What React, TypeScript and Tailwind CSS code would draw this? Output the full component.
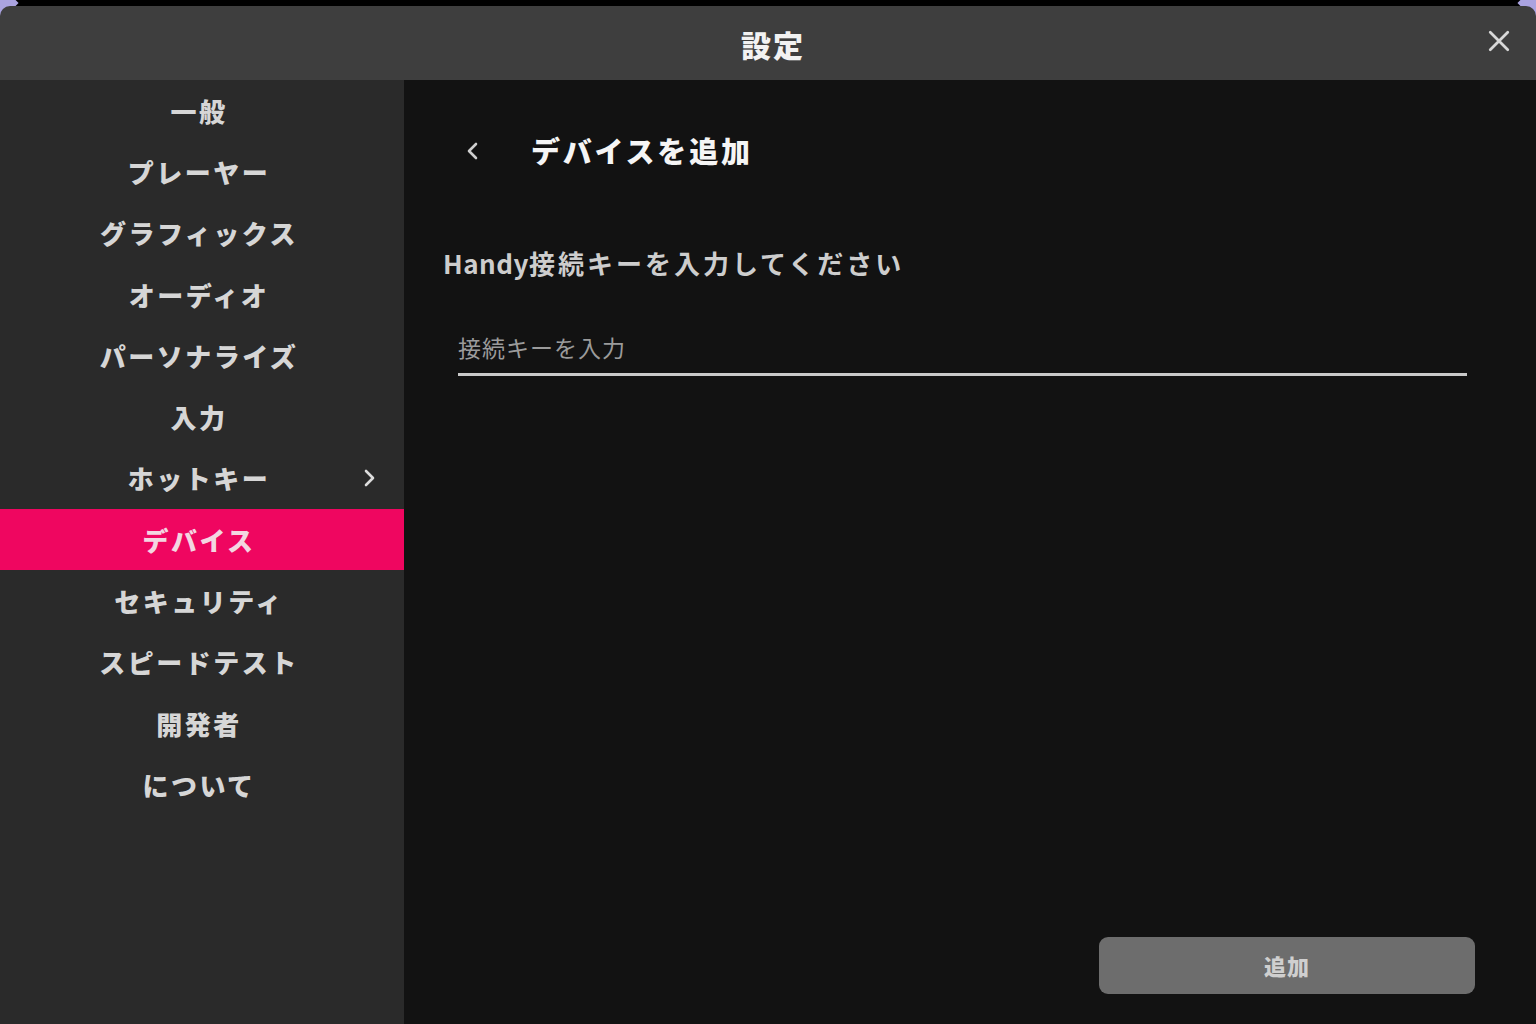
import React from "react";

const items = [
  "一般",
  "プレーヤー",
  "グラフィックス",
  "オーディオ",
  "パーソナライズ",
  "入力",
  "ホットキー",
  "デバイス",
  "セキュリティ",
  "スピードテスト",
  "開発者",
  "について",
];

const font = { fontFamily: '"Noto Sans CJK JP", "Noto Sans", sans-serif' };

function Chevron({ dir, className }: { dir: "left" | "right"; className?: string }) {
  return (
    <svg viewBox="0 0 24 24" className={className} fill="none" stroke="currentColor" strokeWidth={2.6} strokeLinecap="round" strokeLinejoin="round">
      {dir === "left" ? <path d="M15 5l-7 7 7 7" /> : <path d="M9 5l7 7-7 7" />}
    </svg>
  );
}

export default function App() {
  return (
    <div className="relative w-[1536px] h-[1024px] overflow-hidden bg-black flex flex-col pt-[6px]" style={font}>
      <div className="absolute -top-[8px] -left-[8px] w-[22px] h-[22px] rotate-45 bg-[#aaa3e0]" />
      <div className="absolute -top-[8px] -right-[8px] w-[22px] h-[22px] rotate-45 bg-[#aaa3e0]" />

      {/* header */}
      <div className="relative h-[74px] shrink-0 bg-[#3e3e3e] flex items-center justify-center rounded-t-[10px]">
        <span className="text-[30px] font-black text-[#f2f2f2] tracking-[2px] leading-none mt-[2px] ml-[10px]">設定</span>
        <button className="absolute right-[22px] top-[20px] text-[#d8d8d8]">
          <svg viewBox="0 0 24 24" className="w-[30px] h-[30px]" fill="none" stroke="currentColor" strokeWidth={2.2} strokeLinecap="round">
            <path d="M5 5l14 14M19 5L5 19" />
          </svg>
        </button>
      </div>

      <div className="flex flex-1 min-h-0">
        {/* sidebar */}
        <div className="w-[404px] shrink-0 bg-[#2a2a2a] flex flex-col">
          {items.map((label) => {
            const active = label === "デバイス";
            return (
              <div
                key={label}
                className={`relative h-[61.3px] flex items-center justify-center ${active ? "bg-[#ef0660] text-[#f3d6e1]" : "text-[#d6d6d6]"}`}
              >
                <span className="text-[26px] font-black tracking-[2.5px] leading-none -ml-[6px]">{label}</span>
                {label === "ホットキー" && (
                  <Chevron dir="right" className="absolute left-[357px] top-[17px] w-[24px] h-[26px] text-[#dcdcdc]" />
                )}
              </div>
            );
          })}
        </div>

        {/* main */}
        <div className="relative flex-1 bg-[#121212] flex flex-col pl-[39px] pr-[69px]">
          <div className="flex items-center h-[140px] pt-[1px]">
            <Chevron dir="left" className="w-[24px] h-[26px] ml-[18px] text-[#cfcfcf]" />
            <span className="ml-[46px] text-[29px] font-black text-[#f5f5f5] tracking-[2.8px] leading-none">デバイスを追加</span>
          </div>

          <div className="text-[26px] font-bold text-[#cdcdcd] leading-none mt-[30px]">
            <span className="tracking-[0.5px]">Handy</span>
            <span className="tracking-[3px]">接続キーを入力してください</span>
          </div>

          <div className="ml-[15px] mt-[60px] border-b-[3px] border-[#c9c9c9] pb-[11px]">
            <span className="text-[23px] text-[#9b9b9b] tracking-[1px] leading-none">接続キーを入力</span>
          </div>

          <div className="flex-1" />

          <div className="flex justify-end pb-[30px]">
            <button className="w-[376px] h-[57px] rounded-[9px] bg-[#6d6d6d] text-[#cfcfcf] text-[22px] font-black tracking-[1px] -mr-[8px]">
              追加
            </button>
          </div>
        </div>
      </div>
    </div>
  );
}
